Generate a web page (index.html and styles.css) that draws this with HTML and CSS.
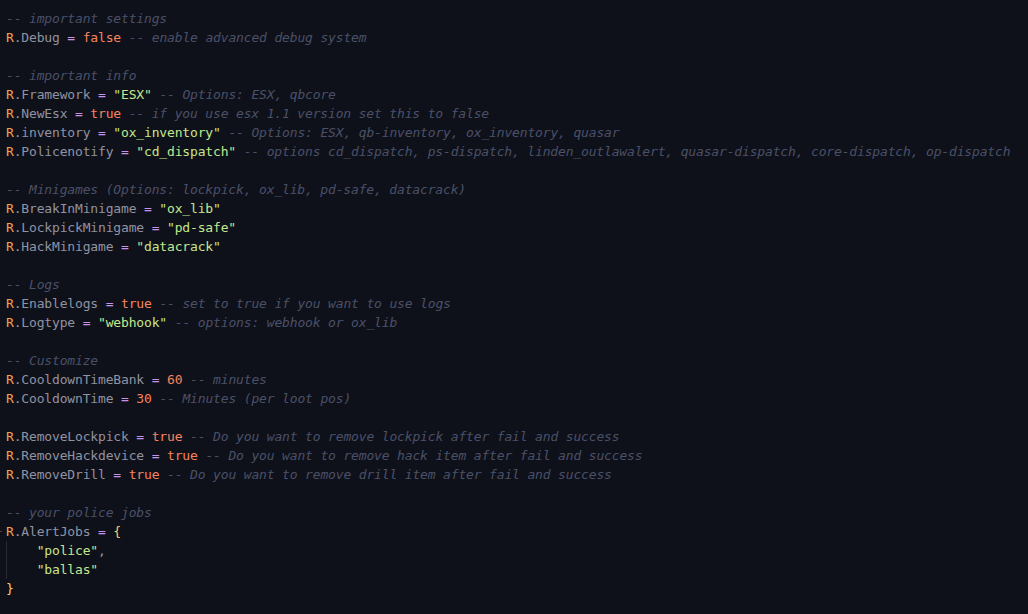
FILE: index.html
```html
<!DOCTYPE html>
<html>
<head>
<meta charset="utf-8">
<link rel="stylesheet" href="styles.css">
</head>
<body>
<div class="editor">
<div class="line"><span class="c">-- important settings</span></div>
<div class="line"><span class="g">R</span><span class="p">.Debug</span> <span class="o">=</span> <span class="k">false</span> <span class="c">-- enable advanced debug system</span></div>
<div class="line"></div>
<div class="line"><span class="c">-- important info</span></div>
<div class="line"><span class="g">R</span><span class="p">.Framework</span> <span class="o">=</span> <span class="s">"ESX"</span> <span class="c">-- Options: ESX, qbcore</span></div>
<div class="line"><span class="g">R</span><span class="p">.NewEsx</span> <span class="o">=</span> <span class="k">true</span> <span class="c">-- if you use esx 1.1 version set this to false</span></div>
<div class="line"><span class="g">R</span><span class="p">.inventory</span> <span class="o">=</span> <span class="s">"ox_inventory"</span> <span class="c">-- Options: ESX, qb-inventory, ox_inventory, quasar</span></div>
<div class="line"><span class="g">R</span><span class="p">.Policenotify</span> <span class="o">=</span> <span class="s">"cd_dispatch"</span> <span class="c">-- options cd_dispatch, ps-dispatch, linden_outlawalert, quasar-dispatch, core-dispatch, op-dispatch</span></div>
<div class="line"></div>
<div class="line"><span class="c">-- Minigames (Options: lockpick, ox_lib, pd-safe, datacrack)</span></div>
<div class="line"><span class="g">R</span><span class="p">.BreakInMinigame</span> <span class="o">=</span> <span class="s">"ox_lib"</span></div>
<div class="line"><span class="g">R</span><span class="p">.LockpickMinigame</span> <span class="o">=</span> <span class="s">"pd-safe"</span></div>
<div class="line"><span class="g">R</span><span class="p">.HackMinigame</span> <span class="o">=</span> <span class="s">"datacrack"</span></div>
<div class="line"></div>
<div class="line"><span class="c">-- Logs</span></div>
<div class="line"><span class="g">R</span><span class="p">.Enablelogs</span> <span class="o">=</span> <span class="k">true</span> <span class="c">-- set to true if you want to use logs</span></div>
<div class="line"><span class="g">R</span><span class="p">.Logtype</span> <span class="o">=</span> <span class="s">"webhook"</span> <span class="c">-- options: webhook or ox_lib</span></div>
<div class="line"></div>
<div class="line"><span class="c">-- Customize</span></div>
<div class="line"><span class="g">R</span><span class="p">.CooldownTimeBank</span> <span class="o">=</span> <span class="k">60</span> <span class="c">-- minutes</span></div>
<div class="line"><span class="g">R</span><span class="p">.CooldownTime</span> <span class="o">=</span> <span class="k">30</span> <span class="c">-- Minutes (per loot pos)</span></div>
<div class="line"></div>
<div class="line"><span class="g">R</span><span class="p">.RemoveLockpick</span> <span class="o">=</span> <span class="k">true</span> <span class="c">-- Do you want to remove lockpick after fail and success</span></div>
<div class="line"><span class="g">R</span><span class="p">.RemoveHackdevice</span> <span class="o">=</span> <span class="k">true</span> <span class="c">-- Do you want to remove hack item after fail and success</span></div>
<div class="line"><span class="g">R</span><span class="p">.RemoveDrill</span> <span class="o">=</span> <span class="k">true</span> <span class="c">-- Do you want to remove drill item after fail and success</span></div>
<div class="line"></div>
<div class="line"><span class="c">-- your police jobs</span></div>
<div class="line mark"><span class="g">R</span><span class="p">.AlertJobs</span> <span class="o">=</span> <span class="b">{</span></div>
<div class="line guide">    <span class="s">"police"</span><span class="p">,</span></div>
<div class="line guide">    <span class="s">"ballas"</span></div>
<div class="line"><span class="b">}</span></div>
</div>
</body>
</html>
```

FILE: styles.css
```css
html, body {
  margin: 0;
  padding: 0;
  background: #0f111a;
  height: 100%;
}

.editor {
  padding: 9px 0 0 6px;
  font-family: "DejaVu Sans Mono", "Liberation Mono", monospace;
  font-size: 13px;
  letter-spacing: -0.16px;
  color: #8f93a2;
}

.line {
  height: 19px;
  line-height: 19px;
  white-space: pre;
  position: relative;
}

.guide::before {
  content: "";
  position: absolute;
  left: 0;
  top: 0;
  bottom: 0;
  width: 1px;
  background: #262a38;
}

.mark::before {
  content: "";
  position: absolute;
  left: -6px;
  top: 9px;
  width: 2px;
  height: 1px;
  background: #6e3434;
}

.c { color: #4a5068; font-style: italic; }
.g { color: #f3a04a; }
.p { color: #8f93a2; }
.o { color: #c792ea; }
.k { color: #f7845e; }
.s { color: #c3e88d; }
.b { color: #ffcb6b; }
```
